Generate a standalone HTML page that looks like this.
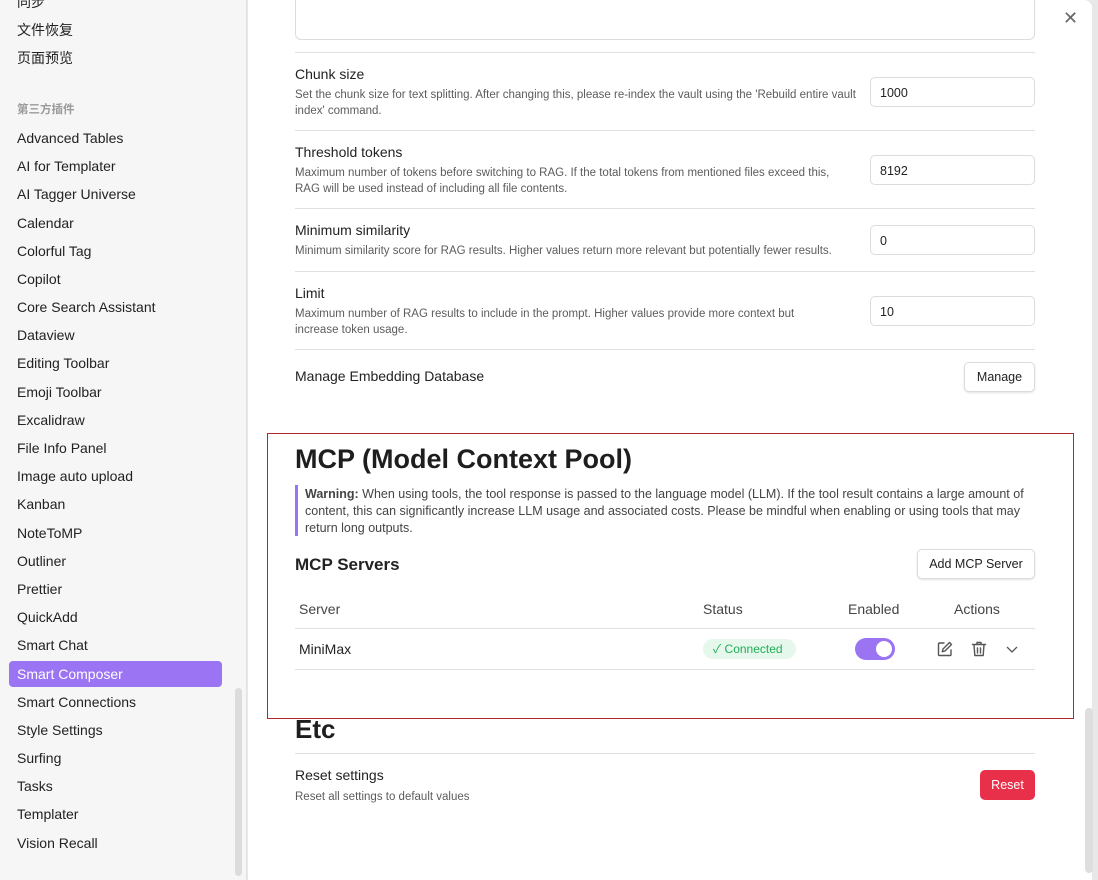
<!DOCTYPE html>
<html><head><meta charset="utf-8"><style>
*{box-sizing:border-box;margin:0;padding:0}
body{width:1098px;height:880px;overflow:hidden;background:#e8e8e8;font-family:"Liberation Sans","Noto Sans CJK SC",sans-serif;color:#222;position:relative}
.side{position:absolute;left:0;top:0;width:247px;height:880px;background:#f6f6f6;border-right:1px solid #e2e2e2}
.si{position:absolute;left:17px;font-size:14px;color:#222;white-space:nowrap}
.sel{position:absolute;left:9px;top:661px;width:213px;height:26px;background:#9a74f3;border-radius:4px}
.main{position:absolute;left:248px;top:0;width:844px;height:880px;background:#fff;border-top-right-radius:8px}
.a{position:absolute;white-space:nowrap}
.t{font-size:14px;color:#222}
.d{font-size:11.5px;color:#5c5c5c;line-height:16px;white-space:normal}
.hr{position:absolute;left:295px;width:740px;height:1px;background:#e0e0e0}
.inp{position:absolute;left:870px;width:165px;height:30px;border:1px solid #dcdcdc;border-radius:5px;font-size:12.5px;padding:8px 9px;color:#222}
.btn{position:absolute;border:1px solid #dcdcdc;border-radius:5px;box-shadow:0 1px 2px rgba(0,0,0,.12);font-size:12.5px;color:#222;background:#fff;text-align:center}
</style></head><body>
<div class="side">
<div class="si" style="top:-8px">同步</div>
<div class="si" style="top:20px">文件恢复</div>
<div class="si" style="top:48px">页面预览</div>
<div class="si" style="top:101px;font-size:11.5px;color:#9a9a9a;font-weight:bold">第三方插件</div>
<div class="sel"></div>
<div class="si" style="top:130px">Advanced Tables</div>
<div class="si" style="top:158px">AI for Templater</div>
<div class="si" style="top:186px">AI Tagger Universe</div>
<div class="si" style="top:215px">Calendar</div>
<div class="si" style="top:243px">Colorful Tag</div>
<div class="si" style="top:271px">Copilot</div>
<div class="si" style="top:299px">Core Search Assistant</div>
<div class="si" style="top:327px">Dataview</div>
<div class="si" style="top:355px">Editing Toolbar</div>
<div class="si" style="top:384px">Emoji Toolbar</div>
<div class="si" style="top:412px">Excalidraw</div>
<div class="si" style="top:440px">File Info Panel</div>
<div class="si" style="top:468px">Image auto upload</div>
<div class="si" style="top:496px">Kanban</div>
<div class="si" style="top:525px">NoteToMP</div>
<div class="si" style="top:553px">Outliner</div>
<div class="si" style="top:581px">Prettier</div>
<div class="si" style="top:609px">QuickAdd</div>
<div class="si" style="top:637px">Smart Chat</div>
<div class="si" style="top:666px;color:#fff">Smart Composer</div>
<div class="si" style="top:694px">Smart Connections</div>
<div class="si" style="top:722px">Style Settings</div>
<div class="si" style="top:750px">Surfing</div>
<div class="si" style="top:778px">Tasks</div>
<div class="si" style="top:806px">Templater</div>
<div class="si" style="top:835px">Vision Recall</div>
<div style="position:absolute;left:235px;top:688px;width:7px;height:188px;background:#dcdcdc;border-radius:4px"></div>
</div>
<div class="main"></div>
<div class="a" style="left:295px;top:-10px;width:740px;height:50px;border:1px solid #dcdcdc;border-radius:6px"></div>
<div class="a" style="left:1063px;top:8px;font-size:18px;color:#666">✕</div>
<div class="hr" style="top:52px"></div>
<div class="a t" style="left:295px;top:66px">Chunk size</div>
<div class="a d" style="left:295px;top:87px;width:562px">Set the chunk size for text splitting. After changing this, please re-index the vault using the 'Rebuild entire vault index' command.</div>
<div class="inp" style="top:77px">1000</div>
<div class="hr" style="top:130px"></div>
<div class="a t" style="left:295px;top:144px">Threshold tokens</div>
<div class="a d" style="left:295px;top:165px;width:540px">Maximum number of tokens before switching to RAG. If the total tokens from mentioned files exceed this, RAG will be used instead of including all file contents.</div>
<div class="inp" style="top:155px">8192</div>
<div class="hr" style="top:208px"></div>
<div class="a t" style="left:295px;top:222px">Minimum similarity</div>
<div class="a d" style="left:295px;top:243px;width:570px;white-space:nowrap">Minimum similarity score for RAG results. Higher values return more relevant but potentially fewer results.</div>
<div class="inp" style="top:225px">0</div>
<div class="hr" style="top:271px"></div>
<div class="a t" style="left:295px;top:285px">Limit</div>
<div class="a d" style="left:295px;top:306px;width:530px">Maximum number of RAG results to include in the prompt. Higher values provide more context but increase token usage.</div>
<div class="inp" style="top:296px">10</div>
<div class="hr" style="top:349px"></div>
<div class="a t" style="left:295px;top:368px">Manage Embedding Database</div>
<div class="btn" style="left:964px;top:362px;width:71px;height:30px;line-height:28px">Manage</div>

<div class="a" style="left:267px;top:433px;width:807px;height:286px;border:1px solid #b0282e"></div>
<div class="a" style="left:295px;top:444px;font-size:27px;font-weight:bold;color:#1e1e1e">MCP (Model Context Pool)</div>
<div class="a" style="left:295px;top:485px;width:3px;height:51px;background:#9a74f3"></div>
<div class="a" style="left:305px;top:486px;width:740px;font-size:12.5px;line-height:17px;color:#444;white-space:normal"><b>Warning:</b> When using tools, the tool response is passed to the language model (LLM). If the tool result contains a large amount of content, this can significantly increase LLM usage and associated costs. Please be mindful when enabling or using tools that may return long outputs.</div>
<div class="a" style="left:295px;top:555px;font-size:17px;font-weight:bold;color:#222">MCP Servers</div>
<div class="btn" style="left:917px;top:549px;width:118px;height:30px;line-height:28px">Add MCP Server</div>
<div class="a" style="left:299px;top:601px;font-size:14px;color:#444">Server</div>
<div class="a" style="left:703px;top:601px;font-size:14px;color:#444">Status</div>
<div class="a" style="left:848px;top:601px;font-size:14px;color:#444">Enabled</div>
<div class="a" style="left:954px;top:601px;font-size:14px;color:#444">Actions</div>
<div class="hr" style="top:628px"></div>
<div class="a" style="left:299px;top:641px;font-size:14px;color:#222">MiniMax</div>
<div class="a" style="left:703px;top:639px;width:93px;height:20px;border-radius:10px;background:#e6f7ec;color:#1fae57;font-size:12px;line-height:20px;padding-left:10px">✓ Connected</div>
<div class="a" style="left:855px;top:638px;width:40px;height:22px;border-radius:11px;background:#9a74f3"><div style="position:absolute;right:3px;top:3px;width:16px;height:16px;border-radius:50%;background:#fff"></div></div>
<svg class="a" style="left:936px;top:640px" width="18" height="18" viewBox="0 0 18 18" fill="none" stroke="#555" stroke-width="1.4" stroke-linecap="round" stroke-linejoin="round"><path d="M8 3H3.5a1 1 0 0 0-1 1v10.5a1 1 0 0 0 1 1H14a1 1 0 0 0 1-1V10"/><path d="M13.5 2.5l2 2L9 11l-2.7.7.7-2.7z"/></svg>
<svg class="a" style="left:970px;top:640px" width="18" height="18" viewBox="0 0 18 18" fill="none" stroke="#555" stroke-width="1.4" stroke-linecap="round" stroke-linejoin="round"><path d="M2.5 4.5h13M7 4.5V2.5h4v2M4 4.5l.8 11h8.4l.8-11M7.5 8v5M10.5 8v5"/></svg>
<svg class="a" style="left:1006px;top:644px" width="12" height="10" viewBox="0 0 12 10" fill="none" stroke="#555" stroke-width="1.3"><path d="M1 3l5 5 5-5"/></svg>
<div class="hr" style="top:669px"></div>

<div class="a" style="left:295px;top:714px;font-size:26px;font-weight:bold;color:#1e1e1e">Etc</div>
<div class="hr" style="top:753px"></div>
<div class="a t" style="left:295px;top:767px">Reset settings</div>
<div class="a d" style="left:295px;top:789px">Reset all settings to default values</div>
<div class="a" style="left:980px;top:770px;width:55px;height:30px;border-radius:5px;background:#e9304a;color:#fff;font-size:12.5px;text-align:center;line-height:30px">Reset</div>
<div class="a" style="left:1085px;top:708px;width:8px;height:165px;background:#dedede;border-radius:4px"></div>
</body></html>
